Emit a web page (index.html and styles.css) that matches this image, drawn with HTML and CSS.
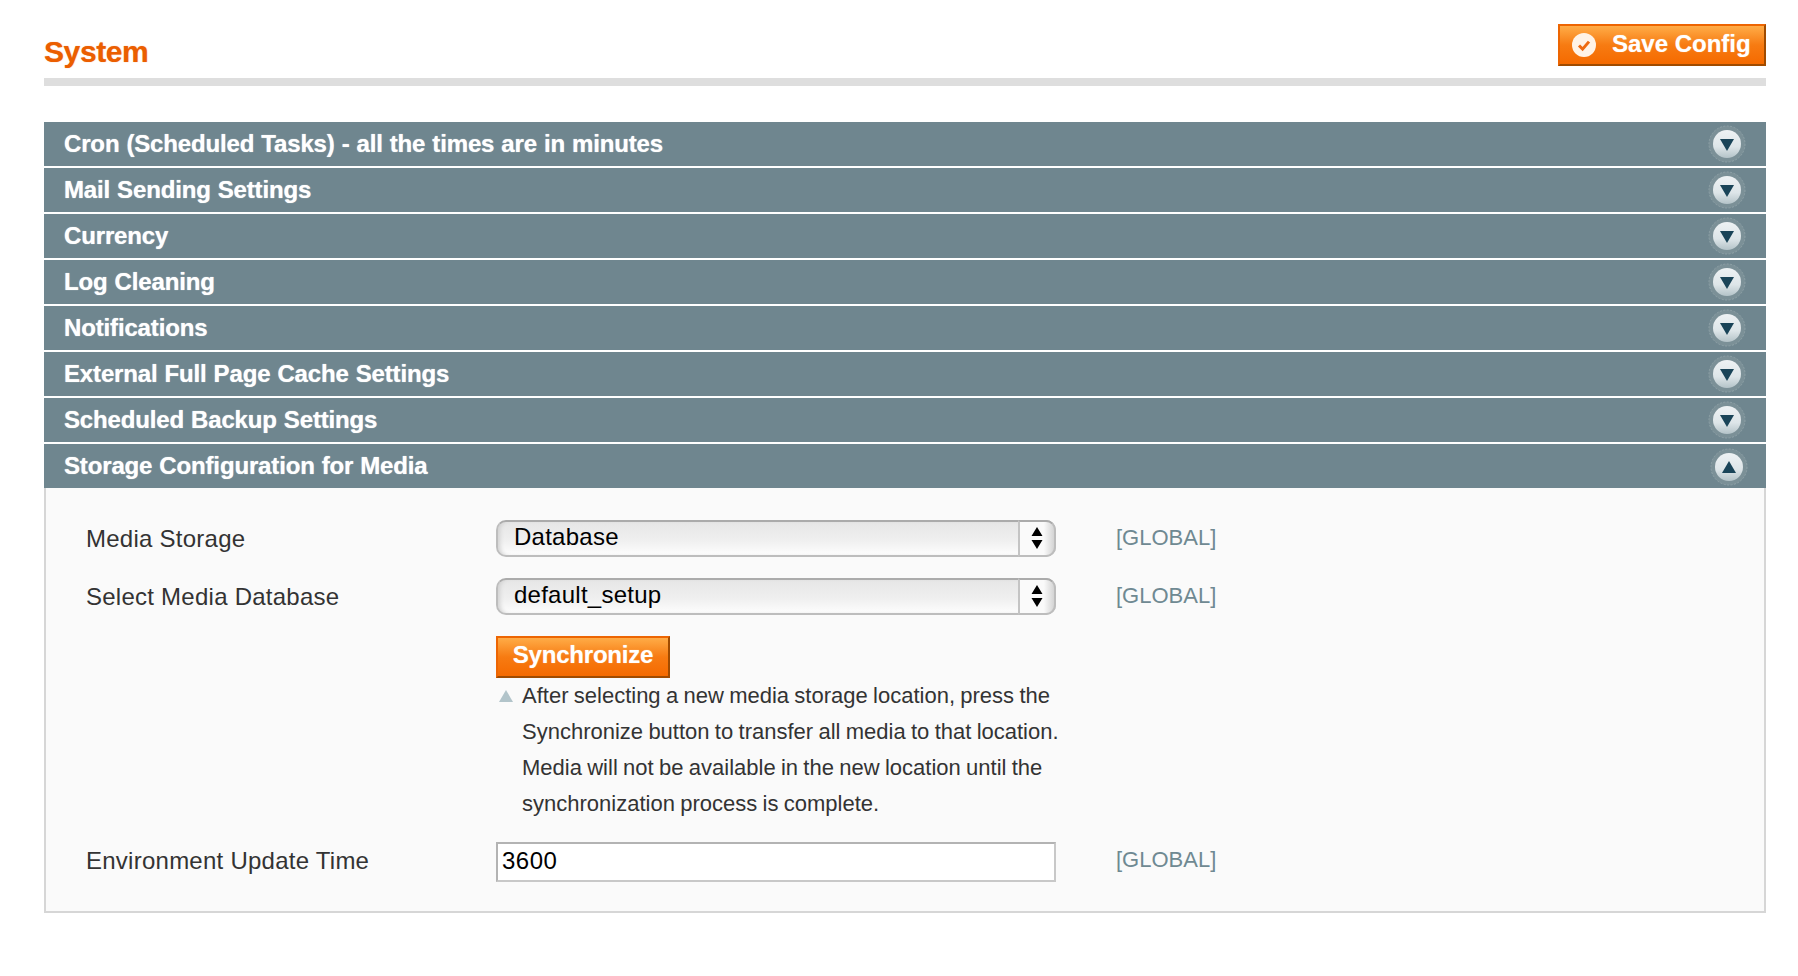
FILE: index.html
```html
<!DOCTYPE html>
<html lang="en">
<head>
<meta charset="utf-8">
<title>System</title>
<link rel="stylesheet" href="styles.css">
</head>
<body>
<svg class="defs" width="0" height="0" aria-hidden="true">
  <defs>
    <linearGradient id="disc" x1="0" y1="0" x2="0" y2="1">
      <stop offset="0" stop-color="#eef2f4"/>
      <stop offset="0.6" stop-color="#dde5e8"/>
      <stop offset="1" stop-color="#b4c3c8"/>
    </linearGradient>
    <symbol id="toggle" viewBox="0 0 38 38">
      <circle cx="19" cy="19" r="18" fill="#7b9097" stroke="#8ea1a7" stroke-width="1" stroke-dasharray="2 1.5"/>
      <circle cx="19" cy="19" r="14" fill="url(#disc)"/>
    </symbol>
  </defs>
</svg>
<main class="page">
  <header class="head">
    <h1 class="title">System</h1>
    <button class="btn btn-save" type="button">
      <svg class="check" viewBox="0 0 24 24" width="24" height="24"><circle cx="12" cy="12" r="12" fill="#fff3e6"/><path d="M7 12.5l3.6 3.6L17 8.6" fill="none" stroke="#ee6a10" stroke-width="3"/></svg>
      <span>Save Config</span>
    </button>
  </header>
  <div class="rule"></div>

  <section class="sections">
    <div class="bar"><span>Cron (Scheduled Tasks) - all the times are in minutes</span><svg class="tog" viewBox="0 0 38 38"><use href="#toggle"/><path d="M12 14h14l-7 12z" fill="#1a4458"/></svg></div>
    <div class="bar"><span>Mail Sending Settings</span><svg class="tog" viewBox="0 0 38 38"><use href="#toggle"/><path d="M12 14h14l-7 12z" fill="#1a4458"/></svg></div>
    <div class="bar"><span>Currency</span><svg class="tog" viewBox="0 0 38 38"><use href="#toggle"/><path d="M12 14h14l-7 12z" fill="#1a4458"/></svg></div>
    <div class="bar"><span>Log Cleaning</span><svg class="tog" viewBox="0 0 38 38"><use href="#toggle"/><path d="M12 14h14l-7 12z" fill="#1a4458"/></svg></div>
    <div class="bar"><span>Notifications</span><svg class="tog" viewBox="0 0 38 38"><use href="#toggle"/><path d="M12 14h14l-7 12z" fill="#1a4458"/></svg></div>
    <div class="bar"><span>External Full Page Cache Settings</span><svg class="tog" viewBox="0 0 38 38"><use href="#toggle"/><path d="M12 14h14l-7 12z" fill="#1a4458"/></svg></div>
    <div class="bar"><span>Scheduled Backup Settings</span><svg class="tog" viewBox="0 0 38 38"><use href="#toggle"/><path d="M12 14h14l-7 12z" fill="#1a4458"/></svg></div>
    <div class="bar bar-open"><span>Storage Configuration for Media</span><svg class="tog tog-up" viewBox="0 0 38 38"><use href="#toggle"/><path d="M12 25h14l-7-12z" fill="#1a4458"/></svg></div>

    <div class="panel">
      <div class="row">
        <label class="lbl">Media Storage</label>
        <div class="val">
          <div class="sel"><select class="sel-native"><option>Database</option></select><span class="sel-arrows"><svg width="12" height="22" viewBox="0 0 12 22"><path d="M6 0l5.5 9H.5zM6 22L.5 13h11z" fill="#000"/></svg></span></div>
        </div>
        <div class="scope">[GLOBAL]</div>
      </div>
      <div class="row">
        <label class="lbl">Select Media Database</label>
        <div class="val">
          <div class="sel"><select class="sel-native"><option>default_setup</option></select><span class="sel-arrows"><svg width="12" height="22" viewBox="0 0 12 22"><path d="M6 0l5.5 9H.5zM6 22L.5 13h11z" fill="#000"/></svg></span></div>
          <button class="btn btn-sync" type="button">Synchronize</button>
          <div class="help">
            <svg class="help-tri" width="14" height="12" viewBox="0 0 14 12"><path d="M7 0l7 12H0z" fill="#b2c4ca"/></svg>
            <p class="help-text">After selecting a new media storage location, press the Synchronize button to transfer all media to that location. Media will not be available in the new location until the synchronization process is complete.</p>
          </div>
        </div>
        <div class="scope">[GLOBAL]</div>
      </div>
      <div class="row">
        <label class="lbl">Environment Update Time</label>
        <div class="val"><input class="txt" type="text" value="3600"></div>
        <div class="scope">[GLOBAL]</div>
      </div>
    </div>
  </section>
</main>
</body>
</html>
```
FILE: styles.css
```css
* { box-sizing: border-box; }
html, body { margin: 0; padding: 0; background: #fff; }
body { font-family: "Liberation Sans", Arial, sans-serif; color: #333; }
.defs { position: absolute; }
.page { width: 1722px; margin-left: 44px; }

.head { height: 78px; display: flex; justify-content: space-between; align-items: flex-start; }
.title { margin: 34px 0 0; font-size: 30px; line-height: 36px; font-weight: bold; color: #eb5e00; letter-spacing: -0.4px; text-shadow: 0 0 1px rgba(235,94,0,.6); }
.rule { height: 8px; background: #dedede; margin-bottom: 36px; }

.btn { display: block; border: 2px solid #ed6502; border-right-color: #a04b00; border-bottom-color: #a04b00; background: linear-gradient(#ffac47, #f77b12 50%, #f56a00); color: #fff; font-family: "Liberation Sans", Arial, sans-serif; font-weight: bold; font-size: 24px; padding: 0; cursor: pointer; text-shadow: 0 0 1px rgba(255,255,255,.6); }
.btn-save { width: 208px; height: 42px; margin-top: 24px; display: flex; align-items: center; padding: 0 0 2px 12px; gap: 16px; }
.check { flex: none; margin-top: 2px; }
.btn-sync { width: 174px; height: 42px; margin-top: 20px; padding-bottom: 4px; text-align: center; letter-spacing: -0.2px; }

.bar { height: 44px; margin-bottom: 2px; background: #6f868f; color: #fff; font-weight: bold; font-size: 24px; letter-spacing: -0.15px; word-spacing: 0.5px; display: flex; align-items: center; justify-content: space-between; padding: 0 20px; text-shadow: 0 0 1px rgba(255,255,255,.8); }
.bar-open { margin-bottom: 0; }
.tog { width: 38px; height: 38px; margin: -1px 0 0; }
.tog-up { margin: 1px -2px 0 0; }

.panel { background: #fafafa; border: 2px solid #d6d6d6; border-top: 0; padding: 32px 40px 29px; display: flex; flex-direction: column; gap: 20px; }
.row { display: grid; grid-template-columns: 410px 560px auto; align-items: start; }
.lbl { font-size: 24px; line-height: 38px; color: #333; letter-spacing: 0.25px; }
.scope { font-size: 22px; line-height: 36px; color: #6f8992; margin-left: 60px; }

.sel { position: relative; height: 38px; }
.sel-native { appearance: none; -webkit-appearance: none; display: block; width: 100%; height: 37px; border: 2px solid #bdbdbd; border-top-color: #ababab; border-radius: 10px; background: linear-gradient(#e6e6e6, #efefef 55%, #fdfdfd); box-shadow: inset 4px 0 4px -2px #d0d0d0; font-family: "Liberation Sans", Arial, sans-serif; font-size: 24px; letter-spacing: 0.25px; color: #000; padding: 0 0 5px 16px; outline: 0; }
.sel-arrows { position: absolute; top: 0; right: 0; width: 38px; height: 37px; border-left: 2px solid #c4c4c4; border-top: 2px solid #ababab; border-bottom: 2px solid #bdbdbd; border-right: 2px solid #bdbdbd; border-radius: 0 10px 10px 0; background: linear-gradient(90deg, #fafafa 70%, #d4d4d4); display: flex; align-items: center; justify-content: center; padding-bottom: 1px; }

.help { display: flex; margin-top: 0; }
.help-tri { flex: none; margin: 12px 9px 0 3px; }
.help-text { flex: none; margin: 0; width: 552px; font-size: 22px; line-height: 36px; color: #333; word-spacing: -0.8px; }

.txt { display: block; width: 100%; height: 40px; border: 2px solid #b3b3b3; border-bottom-color: #c8c8c8; border-right-color: #c8c8c8; background: #fff; font-family: "Liberation Sans", Arial, sans-serif; font-size: 24px; letter-spacing: 0.5px; color: #000; padding: 0 4px 2px; border-radius: 0; outline: 0; }
```
